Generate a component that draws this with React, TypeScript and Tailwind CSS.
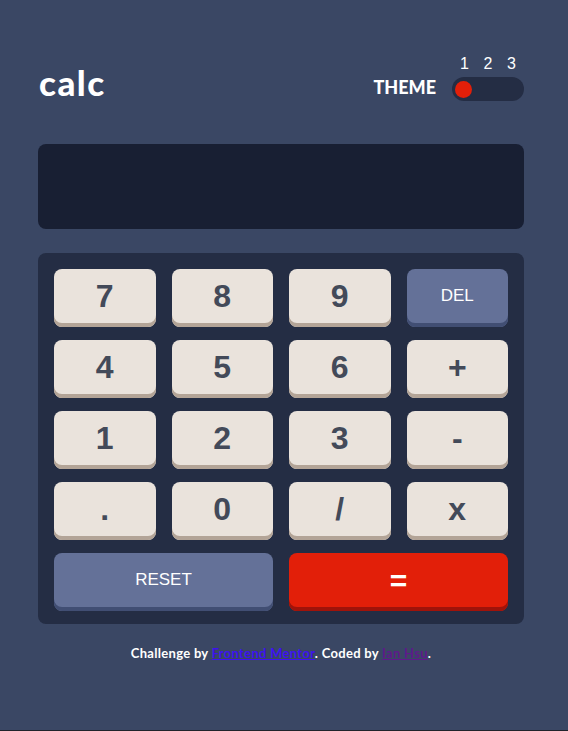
import React from "react";

type K = { label: string; kind: "num" | "del" | "reset" | "eq"; span?: boolean };

const keys: K[] = [
  { label: "7", kind: "num" },
  { label: "8", kind: "num" },
  { label: "9", kind: "num" },
  { label: "DEL", kind: "del" },
  { label: "4", kind: "num" },
  { label: "5", kind: "num" },
  { label: "6", kind: "num" },
  { label: "+", kind: "num" },
  { label: "1", kind: "num" },
  { label: "2", kind: "num" },
  { label: "3", kind: "num" },
  { label: "-", kind: "num" },
  { label: ".", kind: "num" },
  { label: "0", kind: "num" },
  { label: "/", kind: "num" },
  { label: "x", kind: "num" },
  { label: "RESET", kind: "reset", span: true },
  { label: "=", kind: "eq", span: true },
];

function Key({ k }: { k: K }) {
  let cls = "";
  if (k.kind === "num")
    cls = "bg-[#eae3dc] shadow-[inset_0_-4px_0_#b3a497] text-[#434a59] text-[32px] font-bold";
  else if (k.kind === "del")
    cls = "bg-[#647198] shadow-[inset_0_-4px_0_#414e73] text-white text-[17px]";
  else if (k.kind === "reset")
    cls = "col-span-2 bg-[#647198] shadow-[inset_0_-4px_0_#414e73] text-white text-[17px]";
  else cls = "col-span-2 bg-[#e21f09] shadow-[inset_0_-4px_0_#a0130a] text-white text-[30px] font-bold";
  return (
    <div
      className={`h-[58px] rounded-[8px] flex items-center justify-center pb-[4px] ${cls}`}
      style={{ fontFamily: '"Liberation Sans", Arial, sans-serif' }}
    >
      {k.label}
    </div>
  );
}

export default function App() {
  return (
    <div className="w-full h-[731px] bg-[#3a4764] border-b border-[#20232b] box-border">
      <div className="w-[486px] ml-[38px] pt-[56px]">
        <div className="flex justify-between items-end h-[45px]">
          <div
            className="text-white text-[35px] font-black leading-none tracking-[1.5px] pb-[1px] pl-[1px]"
            style={{ fontFamily: 'Lato, "Noto Sans", sans-serif' }}
          >
            calc
          </div>
          <div className="flex items-end gap-[16px]">
            <div
              className="text-white text-[18px] font-black tracking-[0px] leading-none pb-[5px]"
              style={{ fontFamily: 'Lato, "Noto Sans", sans-serif' }}
            >
              THEME
            </div>
            <div className="flex flex-col items-center">
              <div
                className="flex w-[72px] justify-between px-[8px] text-white text-[16px] leading-[16px] mb-[5px]"
                style={{ fontFamily: '"Liberation Sans", Arial, sans-serif' }}
              >
                <span>1</span>
                <span>2</span>
                <span>3</span>
              </div>
              <div className="w-[72px] h-[24px] rounded-full bg-[#242d44] flex items-center px-[3px]">
                <div className="w-[17px] h-[17px] rounded-full bg-[#e21f09]" />
              </div>
            </div>
          </div>
        </div>

        <div className="mt-[43px] h-[85px] rounded-[8px] bg-[#181f33]" />

        <div className="mt-[24px] rounded-[8px] bg-[#242d44] pt-[16px] pb-[13px] px-[16px] grid grid-cols-4 gap-x-[16px] gap-y-[13px]">
          {keys.map((k, i) => (
            <Key key={i} k={k} />
          ))}
        </div>

        <div
          className="mt-[20px] text-center text-white text-[13px] font-bold tracking-[0.3px]"
          style={{ fontFamily: 'Lato, "Noto Sans", sans-serif' }}
        >
          Challenge by{" "}
          <a className="text-[#3d12f0] underline" href="#">
            Frontend Mentor
          </a>
          . Coded by{" "}
          <a className="text-[#5e1a8b] underline" href="#">
            Ian Hsu
          </a>
          .
        </div>
      </div>
    </div>
  );
}
